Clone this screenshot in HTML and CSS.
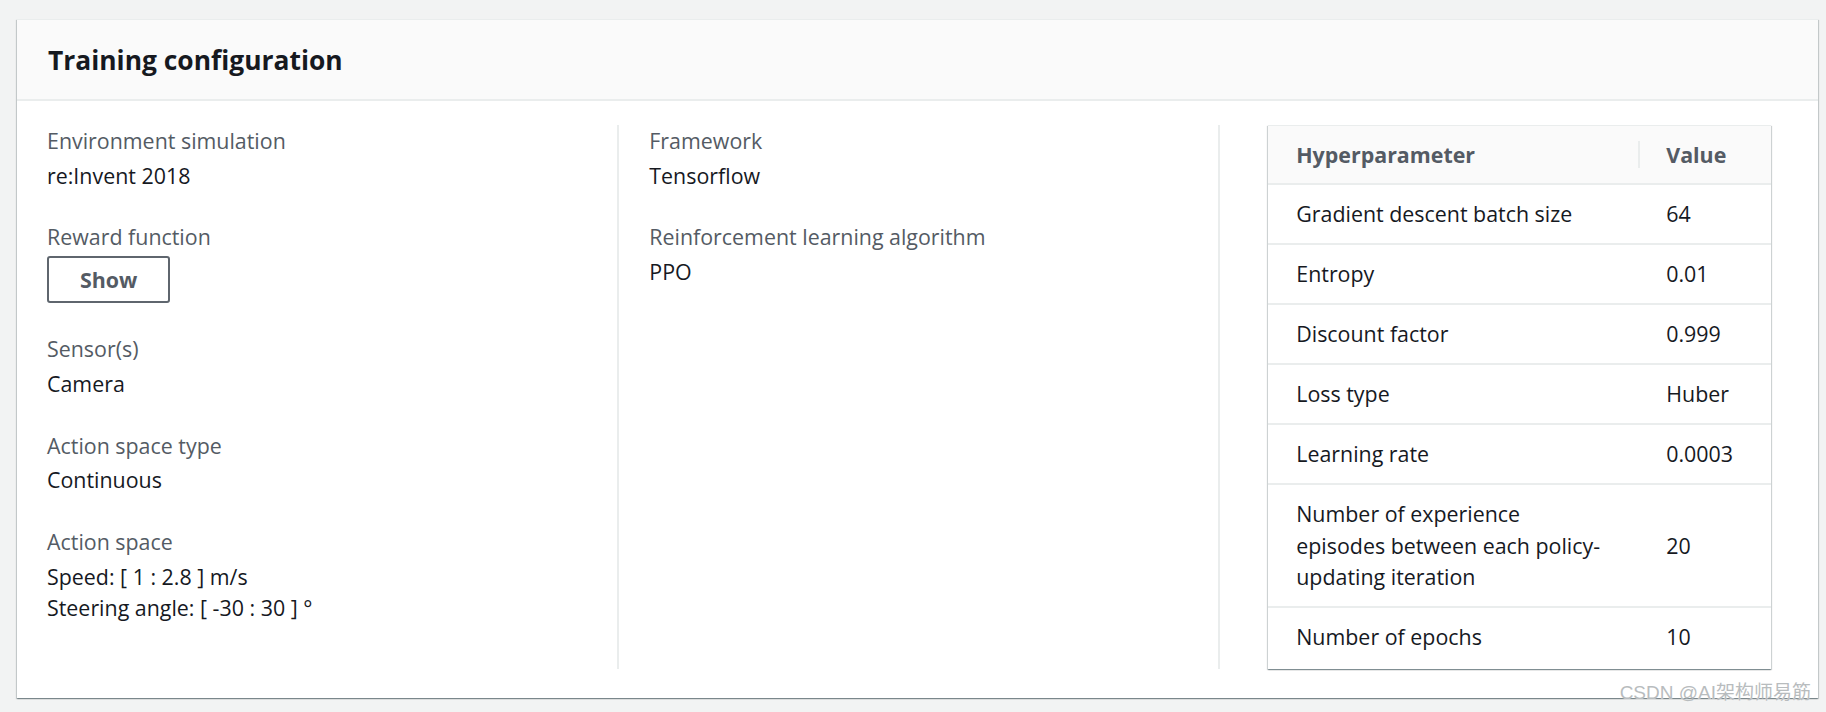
FILE: index.html
```html
<!DOCTYPE html>
<html lang="en">
<head>
<meta charset="utf-8">
<title>Training configuration</title>
<link rel="stylesheet" href="styles.css">
</head>
<body>
<div class="card">
  <div class="card-header">
    <h2 class="title">Training configuration</h2>
  </div>
  <div class="card-body">
    <div class="col">
      <div class="kv">
        <div class="k">Environment simulation</div>
        <div class="v">re:Invent 2018</div>
      </div>
      <div class="kv">
        <div class="k">Reward function</div>
        <div class="v"><button class="btn" type="button">Show</button></div>
      </div>
      <div class="kv">
        <div class="k">Sensor(s)</div>
        <div class="v">Camera</div>
      </div>
      <div class="kv">
        <div class="k">Action space type</div>
        <div class="v">Continuous</div>
      </div>
      <div class="kv">
        <div class="k">Action space</div>
        <div class="v">Speed: [ 1 : 2.8 ] m/s<br>Steering angle: [ -30 : 30 ] °</div>
      </div>
    </div>
    <div class="col col-divided">
      <div class="kv">
        <div class="k">Framework</div>
        <div class="v">Tensorflow</div>
      </div>
      <div class="kv">
        <div class="k">Reinforcement learning algorithm</div>
        <div class="v">PPO</div>
      </div>
    </div>
    <div class="col col-divided col-table">
      <table class="hp-table">
        <colgroup>
          <col class="c-name">
          <col class="c-value">
        </colgroup>
        <thead>
          <tr>
            <th class="name">Hyperparameter</th>
            <th class="value-h">Value</th>
          </tr>
        </thead>
        <tbody>
          <tr><td class="name">Gradient descent batch size</td><td>64</td></tr>
          <tr><td class="name">Entropy</td><td>0.01</td></tr>
          <tr><td class="name">Discount factor</td><td>0.999</td></tr>
          <tr><td class="name">Loss type</td><td>Huber</td></tr>
          <tr><td class="name">Learning rate</td><td>0.0003</td></tr>
          <tr><td class="name">Number of experience episodes between each policy-updating iteration</td><td>20</td></tr>
          <tr class="last"><td class="name">Number of epochs</td><td>10</td></tr>
        </tbody>
      </table>
    </div>
  </div>
</div>
<div class="watermark">CSDN @AI架构师易筋</div>
</body>
</html>
```
FILE: styles.css
```css
* {
  box-sizing: border-box;
}

html, body {
  margin: 0;
  padding: 0;
}

body {
  background: #f2f3f3;
  font-family: "Open Sans", "Noto Sans", sans-serif;
  font-size: 21.4px;
  line-height: 31.4px;
  color: #16191f;
  width: 1826px;
  height: 712px;
  overflow: hidden;
  position: relative;
}

.card {
  margin: 19px 8px 0 17px;
  background: #ffffff;
  border-top: 1px solid #eaeded;
  box-shadow: 0 1px 1px 0 rgba(0, 28, 36, 0.3),
              1px 1px 1px 0 rgba(0, 28, 36, 0.15),
              -1px 1px 1px 0 rgba(0, 28, 36, 0.15);
}

.card-header {
  height: 81px;
  background: #fafafa;
  border-bottom: 2px solid #eaeded;
  display: flex;
  align-items: center;
  padding: 0 30px 0 31px;
}

.title {
  margin: 0;
  font-size: 26.4px;
  line-height: 32px;
  font-weight: 700;
  color: #16191f;
}

.card-body {
  display: grid;
  grid-template-columns: 1fr 1fr 1fr;
  padding: 24px 0 29px 0;
}

.col {
  padding-left: 30px;
}

.col-divided {
  border-left: 2px solid #eaeded;
}

.col-table {
  padding-left: 48px;
  padding-right: 47px;
}

.kv {
  margin-bottom: 30.4px;
}

.k {
  color: #545b64;
  margin-bottom: 3.2px;
}

.v {
  color: #16191f;
}

.btn {
  display: block;
  font-family: "Open Sans", "Noto Sans", sans-serif;
  font-size: 21.4px;
  line-height: 31.4px;
  font-weight: 700;
  color: #545b64;
  background: #ffffff;
  border: 2px solid #5f666e;
  border-radius: 3px;
  padding: 5.8px 31px;
  margin: 0;
  cursor: pointer;
}

.hp-table {
  width: 503px;
  table-layout: fixed;
  border-collapse: separate;
  border-spacing: 0;
  background: #ffffff;
  border-top: 1px solid #eaeded;
  box-shadow: 0 1px 1px 0 rgba(0, 28, 36, 0.3),
              1px 1px 1px 0 rgba(0, 28, 36, 0.15),
              -1px 1px 1px 0 rgba(0, 28, 36, 0.15);
}

.c-name {
  width: 370px;
}

.c-value {
  width: 133px;
}

.hp-table th,
.hp-table td {
  text-align: left;
  vertical-align: middle;
  padding: 13.3px 28.6px;
  line-height: 31.4px;
  border-bottom: 2px solid #eaeded;
}

.hp-table th {
  background: #fafafa;
  color: #545b64;
  font-weight: 700;
  padding-top: 12.8px;
  padding-bottom: 12.8px;
}

.hp-table td.name {
  padding-right: 34px;
}

.hp-table tr.last td {
  border-bottom: none;
  padding-bottom: 16.5px;
}

.value-h {
  position: relative;
}

.value-h::before {
  content: "";
  position: absolute;
  left: 0;
  top: 15px;
  bottom: 15px;
  width: 2px;
  background: #eaeded;
}

.watermark {
  position: absolute;
  right: 15px;
  top: 682px;
  font-family: "Liberation Sans", "Noto Sans CJK SC", sans-serif;
  font-size: 19px;
  line-height: 22px;
  color: #b8bcbe;
  text-shadow: 0 0 1px rgba(255, 255, 255, 0.9);
  white-space: nowrap;
}
```
